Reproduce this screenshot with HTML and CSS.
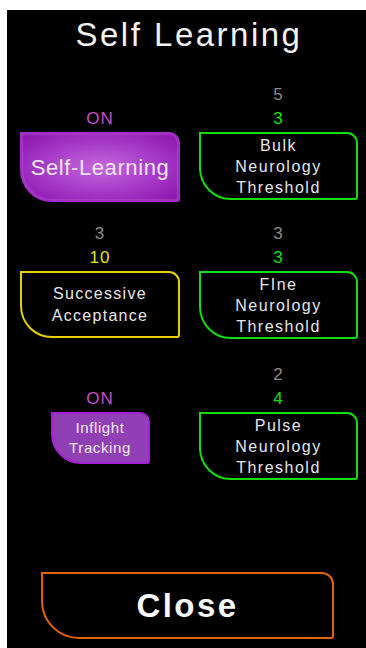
FILE: index.html
```html
<!DOCTYPE html>
<html lang="en">
<head>
    <meta charset="UTF-8">
    <meta name="viewport" content="width=device-width, initial-scale=1.0">
    <title>Self Learning</title>
    <link rel="stylesheet" href="styles.css">
</head>
<body>

    <div class="panel">
        <h1 class="title">Self Learning</h1>

        <!-- settings grid -->
        <div class="rows">
            <div class="row">
                <div class="cell">
                    <div class="labels">
                        <span class="label on">ON</span>
                    </div>
                    <button class="btn btn-toggle">Self-Learning</button>
                </div>
                <div class="cell">
                    <div class="labels">
                        <span class="label dim">5</span>
                        <span class="label green">3</span>
                    </div>
                    <button class="btn btn-green">Bulk<br>Neurology<br>Threshold</button>
                </div>
            </div>

            <div class="row">
                <div class="cell">
                    <div class="labels">
                        <span class="label dim">3</span>
                        <span class="label yellow">10</span>
                    </div>
                    <button class="btn btn-yellow">Successive<br>Acceptance</button>
                </div>
                <div class="cell">
                    <div class="labels">
                        <span class="label dim">3</span>
                        <span class="label green">3</span>
                    </div>
                    <button class="btn btn-green">FIne<br>Neurology<br>Threshold</button>
                </div>
            </div>

            <div class="row row-last">
                <div class="cell">
                    <div class="labels">
                        <span class="label on">ON</span>
                    </div>
                    <button class="btn btn-small">Inflight<br>Tracking</button>
                </div>
                <div class="cell">
                    <div class="labels">
                        <span class="label dim">2</span>
                        <span class="label green">4</span>
                    </div>
                    <button class="btn btn-green">Pulse<br>Neurology<br>Threshold</button>
                </div>
            </div>
        </div>

        <button class="btn btn-close">Close</button>
    </div>

</body>
</html>
```

FILE: styles.css
```css
body {
    margin: 0;
    background: #fff;
    font-family: "Liberation Sans", Arial, sans-serif;
}
.panel {
    margin: 10px 0 0 7px;
    width: 359px;
    height: 638px;
    background: #000;
    display: flex;
    flex-direction: column;
    box-sizing: border-box;
    padding: 0 8px 0 13px;
}
.title {
    margin: 5px 0 0;
    height: 50px;
    font-size: 33px;
    font-weight: normal;
    line-height: 40px;
    letter-spacing: 2.5px;
    color: #f2f2f2;
    text-align: center;
}
.rows {
    display: flex;
    flex-direction: column;
    gap: 20px;
    margin-top: 18px;
}
.row {
    display: grid;
    grid-template-columns: 160px 159px;
    column-gap: 19px;
    align-items: start;
}
.row-last {
    margin-top: 4px;
}
.cell {
    display: flex;
    flex-direction: column;
    align-items: center;
}
.labels {
    height: 49px;
    display: flex;
    flex-direction: column;
    justify-content: flex-end;
    align-items: center;
}
.label {
    height: 24px;
    line-height: 24px;
    font-size: 17px;
    letter-spacing: 1px;
}
.label:last-child {
    margin-bottom: 1px;
}
.dim { color: #8a8a8a; }
.green { color: #10e010; }
.yellow { color: #e8e010; }
.on { color: #c650c6; }

.btn {
    display: flex;
    align-items: center;
    justify-content: center;
    box-sizing: border-box;
    width: 100%;
    height: 68px;
    padding: 0;
    background: #000;
    border: 2px solid #10d010;
    border-radius: 0 11px 3px 32px;
    font-family: "Liberation Sans", Arial, sans-serif;
    font-size: 16px;
    line-height: 21px;
    letter-spacing: 1.5px;
    color: #e6e6e6;
    text-align: center;
    cursor: pointer;
}
.btn-yellow {
    height: 67px;
    border-color: #e6d000;
    line-height: 22px;
    letter-spacing: 1.3px;
}
.btn-green {
    border-color: #12dd12;
}
.btn-toggle {
    height: 70px;
    border-color: #a32ccc;
    background: radial-gradient(ellipse at 50% 50%, #c468da 0%, #aa40cc 45%, #8a12aa 100%);
    box-shadow: inset 0 0 2px #d078e4;
    font-size: 22px;
    letter-spacing: 0.6px;
    color: #f4e6f6;
}
.btn-small {
    width: 99px;
    height: 52px;
    border-color: #a022d0;
    background: #9040b4;
    border-radius: 0 10px 3px 30px;
    font-size: 15px;
    line-height: 20px;
    letter-spacing: 0.6px;
    color: #f2eaf4;
}
.btn-close {
    width: 293px;
    height: 67px;
    margin: auto 0 9px 21px;
    border-color: #e26400;
    border-radius: 0 12px 3px 38px;
    font-size: 33px;
    font-weight: bold;
    letter-spacing: 2.4px;
    color: #fafafa;
}
```
